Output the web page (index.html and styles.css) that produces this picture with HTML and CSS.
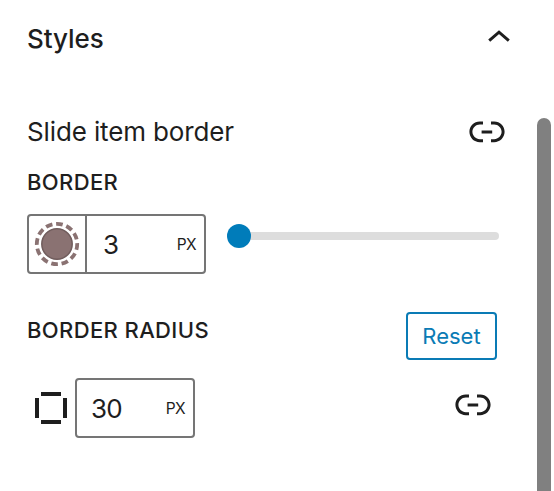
FILE: index.html
```html
<!DOCTYPE html>
<html lang="en">
<head>
<meta charset="utf-8">
<title>Styles</title>
<link rel="stylesheet" href="styles.css">
</head>
<body>
<svg class="defs" aria-hidden="true"><symbol id="link" viewBox="0 0 24 24"><path d="M15.6 7.2H14v1.5h1.6c2 0 3.7 1.7 3.7 3.7s-1.7 3.7-3.7 3.7H14v1.5h1.6c2.8 0 5.2-2.3 5.2-5.2 0-2.9-2.3-5.2-5.2-5.2zM4.7 12.4c0-2 1.7-3.7 3.7-3.7H10V7.2H8.4c-2.9 0-5.2 2.3-5.2 5.2 0 2.9 2.3 5.2 5.2 5.2H10v-1.5H8.4c-2 0-3.7-1.7-3.7-3.7zm4.6.9h5.3v-1.5H9.3v1.5z"/></symbol></svg>
<div class="app">
  <main class="panel">
    <header class="panel-header">
      <h2 class="panel-title">Styles</h2>
      <svg class="chevron" viewBox="0 0 24 14"><path d="M2.2 11.6 12 3.2l9.8 8.4"/></svg>
    </header>
    <section class="group">
      <div class="group-header">
        <h3 class="group-title">Slide item border</h3>
        <svg class="link"><use href="#link"/></svg>
      </div>
      <div class="label label-border">BORDER</div>
      <div class="border-row">
        <div class="field field-border">
          <span class="swatch"><svg viewBox="0 0 56 56"><circle class="ring" cx="28" cy="28" r="20.2" pathLength="120"/><circle class="dot" cx="28" cy="28" r="15.2"/></svg></span>
          <span class="value">3</span><span class="unit">PX</span>
        </div>
        <div class="slider"><span class="thumb"></span><span class="track"></span></div>
      </div>
    </section>
    <section class="group">
      <div class="radius-header">
        <div class="label label-radius">BORDER RADIUS</div>
        <button class="reset">Reset</button>
      </div>
      <div class="radius-row">
        <svg class="corners" viewBox="0 0 32 32"><path d="M6 2h20M6 30h20M2 6v20M30 6v20"/></svg>
        <div class="field field-radius"><span class="value">30</span><span class="unit">PX</span></div>
        <svg class="link"><use href="#link"/></svg>
      </div>
    </section>
  </main>
  <div class="scrollbar"></div>
</div>
</body>
</html>
```
FILE: styles.css
```css
* { box-sizing: border-box; }
body { margin: 0; background: #fff; color: #1e1e1e; font-family: Inter, "Liberation Sans", sans-serif; overflow: hidden; }
.defs { display: none; }
.app { display: flex; height: 491px; }
.panel { width: 537px; padding-left: 27px; }
.scrollbar { width: 14px; margin-top: 118px; border-radius: 7px 7px 0 0; background: #808080; }
.panel-header { display: flex; justify-content: space-between; height: 78px; padding-right: 26px; }
.panel-title, .group-title { margin: 0; font-size: 26px; line-height: 48px; white-space: nowrap; }
.panel-title { margin-top: 15px; font-weight: 500; letter-spacing: -0.05px; }
.group-title { padding-top: 1px; font-weight: 400; letter-spacing: -0.13px; }
.chevron { width: 24px; height: 14px; margin-top: 29px; fill: none; stroke: #1e1e1e; stroke-width: 3; }
.group-header { display: flex; justify-content: space-between; margin-top: 29px; height: 48px; padding-right: 26px; }
.link { display: block; width: 48px; height: 48px; fill: #1e1e1e; }
.label { font-size: 22px; line-height: 28px; font-weight: 500; letter-spacing: 0.38px; white-space: nowrap; }
.label-border { margin-top: 13px; }
.border-row { display: flex; margin-top: 18px; height: 60px; }
.field { display: flex; align-items: center; height: 60px; border: 2px solid #757575; border-radius: 4px; }
.field-border { width: 179px; padding-right: 8px; }
.swatch { width: 58px; height: 56px; border-right: 2px solid #757575; margin-right: 16px; }
.swatch svg { display: block; width: 56px; height: 56px; }
.ring { fill: none; stroke: #8a7272; stroke-width: 3.8; stroke-dasharray: 6.4 3.6; stroke-dashoffset: 0.87; }
.dot { fill: #8a7272; stroke: #705c5c; stroke-width: 1.5; }
.value { padding-top: 2px; font-size: 26px; line-height: 30px; letter-spacing: -0.9px; }
.unit { margin-left: auto; padding-top: 2px; font-size: 15.5px; line-height: 20px; letter-spacing: -0.6px; }
.slider { display: flex; align-items: center; width: 272px; height: 24px; margin: 10px 0 0 21px; }
.thumb { position: relative; z-index: 1; width: 24px; height: 24px; border-radius: 50%; background: #007cba; }
.track { flex: 1; height: 8px; margin-left: -4px; border-radius: 0 4px 4px 0; background: #ddd; }
.radius-header { display: flex; justify-content: space-between; margin-top: 38px; padding-right: 40px; }
.label-radius { margin-top: 4px; }
.reset { width: 91px; height: 48px; padding: 0; border: 2px solid #0a7bb5; border-radius: 4px; background: #fff; color: #0a7bb5; font: 400 22px/44px Inter, sans-serif; }
.radius-row { display: flex; align-items: center; margin-top: 18px; padding: 0 40px 0 8px; }
.corners { width: 32px; height: 32px; fill: none; stroke: #1e1e1e; stroke-width: 4; }
.field-radius { width: 120px; margin-left: 8px; padding: 0 8px 0 14px; }
.radius-row .link { margin: -8px 0 0 auto; }
```
